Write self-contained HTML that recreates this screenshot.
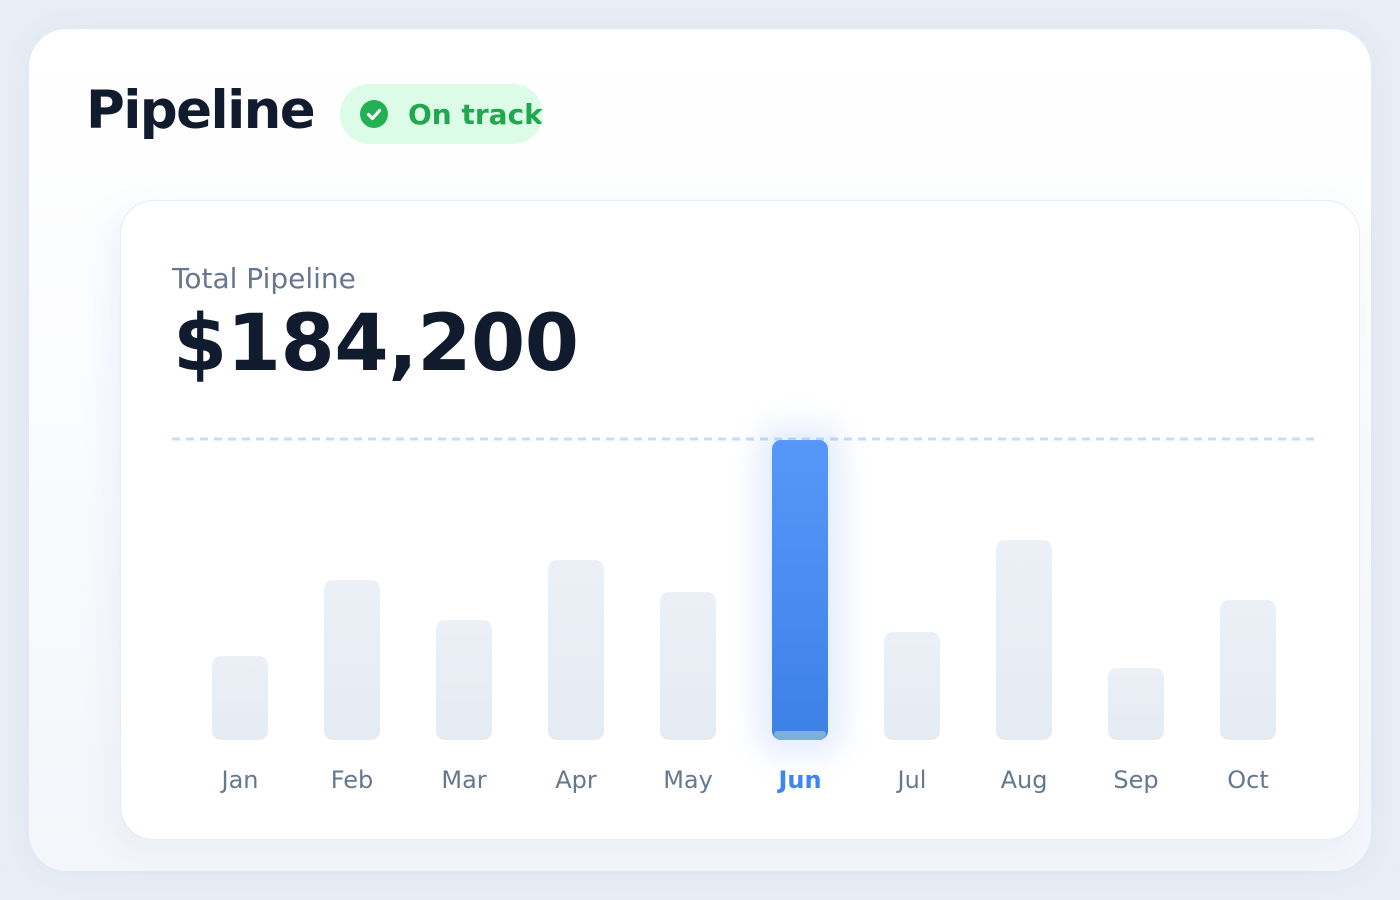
<!DOCTYPE html>
<html><head><meta charset="utf-8"><style>
*{margin:0;padding:0;box-sizing:border-box}
body{width:1400px;height:900px;background:#e8eef6;font-family:"DejaVu Sans","Liberation Sans",sans-serif;position:relative;overflow:hidden}
.outer{position:absolute;left:29px;top:29px;width:1342px;height:842px;border-radius:38px;background:linear-gradient(180deg,#ffffff 0%,#fbfcfe 40%,#f3f6fa 100%);box-shadow:0 0 30px rgba(200,212,230,.35)}
.title{position:absolute;left:86px;top:79px;font-size:53px;font-weight:bold;color:#111b2e;letter-spacing:-1.6px;line-height:64px}
.badge{position:absolute;left:340px;top:84px;width:203px;height:60px;border-radius:30px;background:#dcfce7;overflow:hidden}
.badge .ic{position:absolute;left:20px;top:16px;width:28px;height:28px;border-radius:50%;background:#22b052}
.badge .t{position:absolute;left:68px;top:14px;font-size:28px;font-weight:bold;color:#22a64e;white-space:nowrap;line-height:34px}
.inner{position:absolute;left:120px;top:200px;width:1240px;height:640px;border-radius:34px;background:#fff;border:1.5px solid #e6ecf4;box-shadow:-10px 10px 30px rgba(220,228,240,.4)}
.lbl{position:absolute;left:172px;top:261px;font-size:28px;color:#66788f;line-height:36px}
.val{position:absolute;left:173px;top:296px;font-size:78px;font-weight:bold;color:#111b2e;line-height:96px;letter-spacing:-0.5px}
.dash{position:absolute;left:172px;top:437px}
.bar{position:absolute;width:56px;border-radius:9px;background:linear-gradient(180deg,#ebf0f6,#e4ebf3);bottom:160px}
.bar.on{background:linear-gradient(180deg,#5797fa,#3d80e6);box-shadow:0 0 30px 14px rgba(96,150,250,.18);overflow:hidden}
.bar.on::after{content:"";position:absolute;left:2px;right:2px;bottom:0;height:9px;background:#7cb0d6;border-radius:4px 4px 8px 8px}
.m{position:absolute;top:764px;width:112px;text-align:center;font-size:24px;color:#66788f;line-height:32px}
.m.on{color:#3b86f1;font-weight:bold}
</style></head><body>
<div class="outer"></div>
<div class="title">Pipeline</div>
<div class="badge"><div class="ic"><svg width="28" height="28" viewBox="0 0 28 28"><path d="M8.5 14.5l4 4 7-8" fill="none" stroke="#fff" stroke-width="3.2" stroke-linecap="round" stroke-linejoin="round"/></svg></div><div class="t">On track</div></div>
<div class="inner"></div>
<div class="lbl">Total Pipeline</div>
<div class="val">$184,200</div>
<svg class="dash" width="1148" height="4"><line x1="0" y1="2" x2="1148" y2="2" stroke="#c6dcfb" stroke-width="3" stroke-dasharray="8 6"/></svg>
<div class="bar" style="left:212px;top:656px"></div>
<div class="bar" style="left:324px;top:580px"></div>
<div class="bar" style="left:436px;top:620px"></div>
<div class="bar" style="left:548px;top:560px"></div>
<div class="bar" style="left:660px;top:592px"></div>
<div class="bar on" style="left:772px;top:440px"></div>
<div class="bar" style="left:884px;top:632px"></div>
<div class="bar" style="left:996px;top:540px"></div>
<div class="bar" style="left:1108px;top:668px"></div>
<div class="bar" style="left:1220px;top:600px"></div>
<div class="m" style="left:184px">Jan</div>
<div class="m" style="left:296px">Feb</div>
<div class="m" style="left:408px">Mar</div>
<div class="m" style="left:520px">Apr</div>
<div class="m" style="left:632px">May</div>
<div class="m on" style="left:744px">Jun</div>
<div class="m" style="left:856px">Jul</div>
<div class="m" style="left:968px">Aug</div>
<div class="m" style="left:1080px">Sep</div>
<div class="m" style="left:1192px">Oct</div>
</body></html>
